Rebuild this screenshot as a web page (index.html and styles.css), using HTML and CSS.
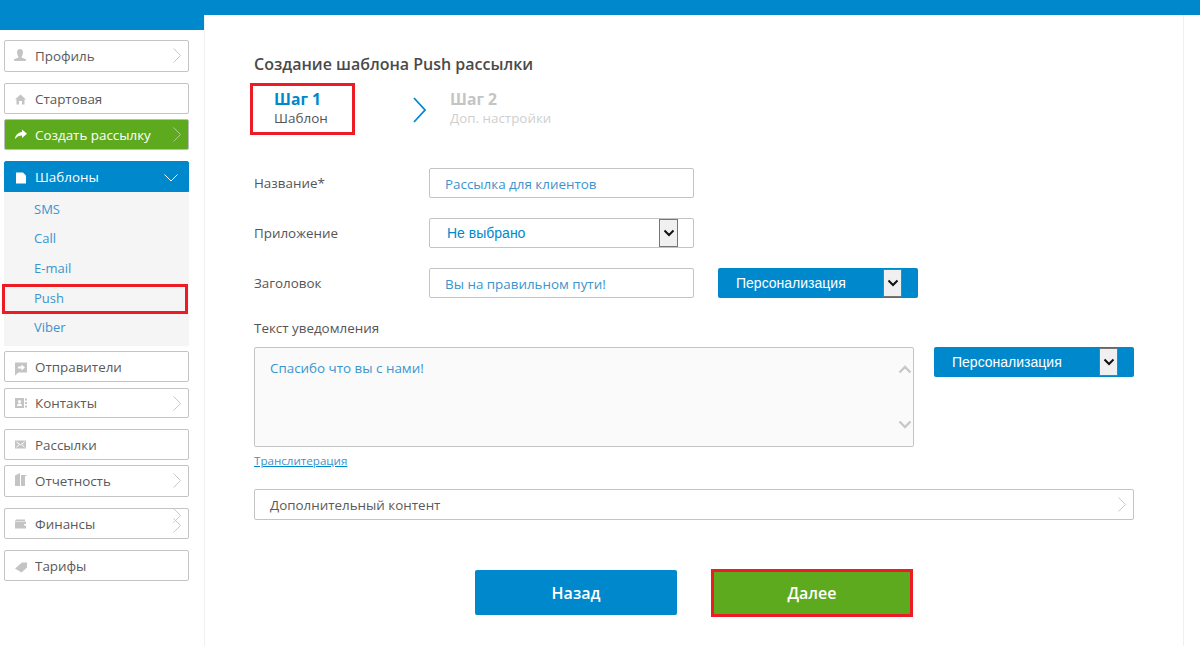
FILE: index.html
```html
<!DOCTYPE html>
<html lang="ru">
<head>
<meta charset="utf-8">
<title>Создание шаблона Push рассылки</title>
<link rel="stylesheet" href="styles.css">
</head>
<body>
<div class="topbar"></div>
<div class="layout">
  <aside class="sidebar">
    <div class="side-cap"></div>
    <nav class="menu">
      <a class="item m-profile">
        <svg class="ico" viewBox="0 0 14 14"><path d="M7 0c2 0 3 1.400 3 3.200S9 7 8.600 7.600v1c.8.600 4.400 1 4.400 2.400v1H1v-1c0-1.400 3.600-1.800 4.400-2.400v-1C5 7 4 5 4 3.200S5 0 7 0z"/></svg>
        <span>Профиль</span>
        <svg class="chev" viewBox="0 0 8 15"><path d="M.5.500l7 7-7 7"/></svg>
      </a>
      <a class="item m-start">
        <svg class="ico" viewBox="0 0 14 14"><path d="M7.500 2.500l5.500 5h-1.500v5H9V9H6v3.500H3.500v-5H2z"/></svg>
        <span>Стартовая</span>
      </a>
      <a class="item item-green m-create">
        <svg class="ico" viewBox="0 0 14 14"><path d="M9 1.500l5 4.300-5 4.200V7.500C6 7.500 4 8.500 2 11 2.400 7 5 4.500 9 4z"/></svg>
        <span>Создать рассылку</span>
        <svg class="chev" viewBox="0 0 8 15"><path d="M.5.500l7 7-7 7"/></svg>
      </a>
      <a class="item item-blue m-tpl">
        <svg class="ico" viewBox="0 0 14 14"><path d="M3 2.500h7l3 3v8H3z"/></svg>
        <span>Шаблоны</span>
        <svg class="chev-down" viewBox="0 0 14 8"><path d="M.5.500L7 7 13.500.500"/></svg>
      </a>
      <div class="submenu">
        <a class="sub">SMS</a>
        <a class="sub">Call</a>
        <a class="sub">E-mail</a>
        <a class="sub sub-marked">Push</a>
        <a class="sub">Viber</a>
      </div>
      <a class="item m-send">
        <svg class="ico" viewBox="0 0 14 14"><path d="M2 2.500h12v10H5.500L2 15.500z"/><path class="cut" d="M5 6.500h3.500V4.500L12 7.500l-3.500 3V8.500H5z"/></svg>
        <span>Отправители</span>
      </a>
      <a class="item m-contacts">
        <svg class="ico" viewBox="0 0 14 14"><path d="M2 2h9v10H2z"/><circle class="cut" cx="6.500" cy="5.500" r="1.600"/><path class="cut" d="M4 10c0-2 1.500-2.500 2.500-2.500S9 8 9 10z"/><path d="M12 2.500h2v2h-2zM12 6h2v2h-2zM12 9.500h2v2h-2z"/></svg>
        <span>Контакты</span>
        <svg class="chev" viewBox="0 0 8 15"><path d="M.5.500l7 7-7 7"/></svg>
      </a>
      <a class="item m-mail">
        <svg class="ico" viewBox="0 0 14 14"><path d="M2 2.500h11v8H2z"/><path class="cut-line" d="M3.500 4l4 3 4-3M3.500 9.200L6 6.800M11.500 9.200L9 6.800"/></svg>
        <span>Рассылки</span>
      </a>
      <a class="item m-report">
        <svg class="ico" viewBox="0 0 14 14"><path d="M2 1.500L7 -1v13H2zM8 1h6l-2 1.500V12H8z"/></svg>
        <span>Отчетность</span>
        <svg class="chev" viewBox="0 0 8 15"><path d="M.5.500l7 7-7 7"/></svg>
      </a>
      <a class="item m-fin">
        <svg class="ico" viewBox="0 0 14 14"><path d="M3 2.500h9v1.500H2zM2 4.500h11v7H2z"/><path class="cut" d="M11 7h2v1.500h-2z"/></svg>
        <span>Финансы</span>
        <svg class="chev chev-extra" viewBox="0 0 8 15"><path d="M.5.500l7 7-7 7"/></svg>
        <svg class="chev chev-low" viewBox="0 0 8 15"><path d="M.5.500l7 7-7 7"/></svg>
      </a>
      <a class="item m-tariff">
        <svg class="ico" viewBox="0 0 14 14"><path d="M9 3.500h5v5l-5.500 5L2 9.500z"/></svg>
        <span>Тарифы</span>
      </a>
    </nav>
  </aside>

  <main class="panel">
    <h1 class="title">Создание шаблона Push рассылки</h1>
    <div class="steps">
      <div class="step step-now">
        <div class="step-name">Шаг 1</div>
        <div class="step-sub">Шаблон</div>
      </div>
      <svg class="step-arrow" viewBox="0 0 13 26"><path d="M1 1l11 12L1 25"/></svg>
      <div class="step step-next">
        <div class="step-name">Шаг 2</div>
        <div class="step-sub">Доп. настройки</div>
      </div>
    </div>

    <div class="row row-first">
      <div class="label">Название*</div>
      <div class="field">Рассылка для клиентов</div>
    </div>
    <div class="row">
      <div class="label">Приложение</div>
      <div class="field field-select">
        <span>Не выбрано</span>
        <span class="arrow-box"><svg viewBox="0 0 12 8"><path d="M1.500 1.500L6 6l4.500-4.500"/></svg></span>
      </div>
    </div>
    <div class="row">
      <div class="label">Заголовок</div>
      <div class="field">Вы на правильном пути!</div>
      <div class="pers pers-gap">
        <span>Персонализация</span>
        <span class="arrow-box"><svg viewBox="0 0 12 8"><path d="M1.500 1.500L6 6l4.500-4.500"/></svg></span>
      </div>
    </div>

    <div class="label label-block">Текст уведомления</div>
    <div class="text-row">
      <div class="textarea">
        <span>Спасибо что вы с нами!</span>
        <div class="scroll">
          <svg viewBox="0 0 14 9"><path d="M1.500 7.500L7 2l5.500 5.500"/></svg>
          <svg viewBox="0 0 14 9"><path d="M1.500 1.500L7 7l5.500-5.500"/></svg>
        </div>
      </div>
      <div class="pers">
        <span>Персонализация</span>
        <span class="arrow-box"><svg viewBox="0 0 12 8"><path d="M1.500 1.500L6 6l4.500-4.500"/></svg></span>
      </div>
    </div>
    <a class="translit">Транслитерация</a>

    <div class="extra">
      <span>Дополнительный контент</span>
      <svg class="chev" viewBox="0 0 8 15"><path d="M.5.500l7 7-7 7"/></svg>
    </div>

    <div class="actions">
      <a class="btn btn-back">Назад</a>
      <a class="btn btn-next">Далее</a>
    </div>
  </main>
</div>
</body>
</html>
```

FILE: styles.css
```css
* { box-sizing: border-box; }
html, body { margin: 0; padding: 0; height: 100%; overflow: hidden; }
body { background: #fff; font-family: "Open Sans", "Liberation Sans", sans-serif; font-size: 14px; color: #555; }

.topbar { height: 15px; background: #0088cc; }
.layout { display: flex; height: 631px; }

.sidebar { width: 204px; flex: none; }
.side-cap { height: 15px; background: #0088cc; }
.menu { display: flex; flex-direction: column; padding: 10px 15px 0 4px; }

.item { position: relative; display: flex; align-items: center; height: 31px; padding-left: 8px; border: 1px solid #c4c4c4; border-radius: 2px; background: #fff; color: #5a5a5a; font-size: 13.400px; }
.item > span { margin-left: 8px; }
.ico { width: 14px; height: 14px; flex: none; fill: #c4c4c4; overflow: visible; }
.ico .cut { fill: #fff; }
.ico .cut-line { fill: none; stroke: #fff; stroke-width: 1; }
.chev { position: absolute; right: 7px; top: 7px; width: 8px; height: 15px; fill: none; stroke: #c8c8c8; stroke-width: 1; }
.chev-extra { top: -1px; }
.chev-low { top: 9px; }
.chev-down { position: absolute; right: 10px; top: 12px; width: 14px; height: 8px; fill: none; stroke: #fff; stroke-width: 1; }

.item-green { background: #5eaa1e; border-color: #bdbdbd; color: #fff; }
.item-green .ico { fill: #fff; }
.item-green .chev { stroke: #a9cf8c; }
.item-blue { background: #0088cc; border-color: #0088cc; color: #fff; border-radius: 2px 2px 0 0; }
.item-blue .ico { fill: #fff; }

.m-profile { height: 32px; padding-bottom: 1px; }
.m-start { margin-top: 11px; }
.m-create { margin-top: 5px; }
.m-tpl { margin-top: 11px; }
.m-send { margin-top: 5px; }
.m-contacts { margin-top: 6px; height: 30px; }
.m-mail { margin-top: 11px; }
.m-report { margin-top: 5px; height: 32px; padding-bottom: 1px; }
.m-fin { margin-top: 11px; }
.m-tariff { margin-top: 11px; }

.submenu { height: 154px; padding-top: 2.800px; background: #f5f5f5; display: flex; flex-direction: column; }
.sub { position: relative; display: block; height: 29.600px; line-height: 29px; padding-left: 30px; color: #3a94d0; font-size: 13px; }
.sub-marked::after { content: ""; position: absolute; box-sizing: border-box; left: -2px; right: 1px; top: 0; height: 30px; border: 3px solid #ed1c24; }

.panel { width: 980px; flex: none; padding: 38px 0 0 49px; border-left: 1px solid #f0f0f0; border-right: 1px solid #f0f0f0; background: #fff; }

.title { margin: 0; font-size: 16px; line-height: 22px; font-weight: 600; color: #4a4a4a; }

.steps { display: flex; align-items: flex-start; margin: 8px 0 0 -4px; height: 52px; }
.step-now { width: 105px; height: 52px; padding: 3px 0 0 21px; border: 3px solid #ed1c24; }
.step-next { padding: 6px 0 0 0; }
.step-name { font-size: 15.700px; line-height: 21px; font-weight: 700; }
.step-sub { font-size: 13.500px; line-height: 19px; margin-top: -1px; }
.step-now .step-name { color: #0088cc; }
.step-now .step-sub { color: #555; }
.step-next .step-name { color: #c4c4c4; }
.step-next .step-sub { color: #cfcfcf; font-size: 13.400px; }
.step-arrow { width: 13px; height: 26px; margin: 14px 24px 0 58px; fill: none; stroke: #0088cc; stroke-width: 1.800; }

.row { display: flex; align-items: center; height: 30px; margin-top: 20px; }
.row-first { margin-top: 33px; }
.label { width: 175px; flex: none; color: #555; font-size: 13.400px; line-height: 20px; }
.label-block { width: auto; margin-top: 20px; }

.field { position: relative; display: flex; align-items: center; width: 265px; height: 30px; padding: 1px 0 0 15px; border: 1px solid #c4c4c4; border-radius: 2px; background: #fff; color: #3a94d0; font-size: 13.400px; }
.field-select { padding: 0 0 0 17px; font-family: "Liberation Sans", Arial, sans-serif; font-size: 14px; color: #0088cc; }

.arrow-box { position: absolute; top: 0; width: 19px; height: 28px; display: flex; align-items: center; justify-content: center; background: #f0f0f0; border: 1px solid #767676; }
.arrow-box svg { width: 12px; height: 8px; fill: none; stroke: #111; stroke-width: 2; }
.field-select .arrow-box { right: 15px; }

.pers { position: relative; flex: none; display: flex; align-items: center; width: 200px; height: 30px; padding-left: 18px; background: #0088cc; border-radius: 2px; color: #fff; font-family: "Liberation Sans", Arial, sans-serif; font-size: 14px; }
.pers .arrow-box { right: 16px; top: 1px; }
.pers-gap { margin-left: 24px; }

.text-row { display: flex; align-items: flex-start; gap: 20px; margin-top: 9px; }
.textarea { position: relative; width: 660px; height: 100px; padding: 10px 15px; border: 1px solid #c4c4c4; border-radius: 2px; background: #fafafa; color: #3a94d0; font-size: 13.400px; line-height: 20px; }
.scroll { position: absolute; right: 1px; top: 17px; bottom: 17px; display: flex; flex-direction: column; justify-content: space-between; }
.scroll svg { display: block; width: 14px; height: 9px; fill: none; stroke: #c8c8c8; stroke-width: 2.400; }

.translit { display: block; margin-top: 6px; height: 16px; width: max-content; font-size: 11.600px; line-height: 16px; color: #3a94d0; text-decoration: underline; text-decoration-color: #0088cc; }

.extra { position: relative; display: flex; align-items: center; width: 880px; height: 31px; margin-top: 20px; padding-left: 15px; border: 1px solid #c4c4c4; border-radius: 2px; color: #5a5a5a; font-size: 13.400px; }
.extra .chev { right: 7px; top: 7px; }

.actions { display: flex; align-items: flex-start; gap: 34px; margin: 49px 0 0 221px; height: 48px; }
.btn { display: flex; align-items: center; justify-content: center; width: 202px; color: #fff; font-size: 16px; font-weight: 600; }
.btn-back { height: 45px; margin-top: 1px; background: #0088cc; border-radius: 2px; }
.btn-next { height: 48px; background: #5eaa1e; border: 3px solid #ed1c24; }
```
